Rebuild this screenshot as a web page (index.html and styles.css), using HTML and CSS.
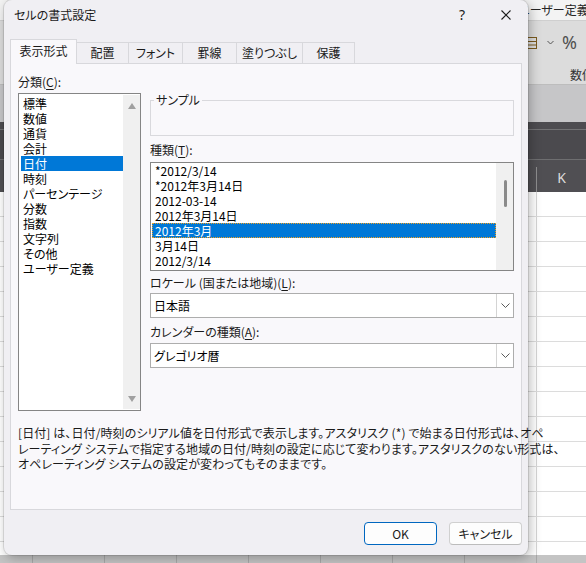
FILE: index.html
```html
<!DOCTYPE html>
<html lang="ja">
<head>
<meta charset="utf-8">
<title>セルの書式設定</title>
<link rel="stylesheet" href="styles.css">
</head>
<body>
<div class="desktop">
  <div class="excel">
    <div class="xl-title">ユーザー定義</div>
    <div class="xl-ribbon">
      <div class="xl-tools">
        <svg class="xl-numicon" width="10" height="12" viewBox="0 0 10 12"><rect x="0.5" y="0.5" width="9" height="11" fill="none" stroke="#7a5a1e"/><path d="M0.5 4.5H9.5M0.5 8H9.5" stroke="#7a5a1e"/></svg>
        <svg class="xl-chev" width="7" height="5" viewBox="0 0 7 5"><path d="M0.5 1L3.5 4L6.5 1" fill="none" stroke="#555" stroke-width="1"/></svg>
        <span class="xl-pct">%</span>
      </div>
      <div class="xl-group">数値</div>
    </div>
    <div class="xl-bar"></div>
    <div class="xl-formula"></div>
    <div class="xl-header"><span class="xl-col">K</span></div>
    <div class="xl-grid"></div>
    <div class="xl-bottom"></div>
  </div>

  <div class="dialog">
    <div class="titlebar">
      <div class="title">セルの書式設定</div>
      <div class="capbtn help">?</div>
      <div class="capbtn close"><svg width="10" height="10" viewBox="0 0 10 10"><path d="M0.5 0.5L9.5 9.5M9.5 0.5L0.5 9.5" stroke="#1b1b1b" stroke-width="1.1"/></svg></div>
    </div>
    <div class="tabs">
      <div class="tab active w67">表示形式</div>
      <div class="tab w52">配置</div>
      <div class="tab w54">フォント</div>
      <div class="tab w54">罫線</div>
      <div class="tab w66">塗りつぶし</div>
      <div class="tab w52">保護</div>
    </div>
    <div class="panel">
      <div class="cols">
        <div class="col-left">
          <div class="label">分類(<u>C</u>):</div>
          <div class="listbox cat">
            <ul class="items">
              <li>標準</li>
              <li>数値</li>
              <li>通貨</li>
              <li>会計</li>
              <li class="sel">日付</li>
              <li>時刻</li>
              <li>パーセンテージ</li>
              <li>分数</li>
              <li>指数</li>
              <li>文字列</li>
              <li>その他</li>
              <li>ユーザー定義</li>
            </ul>
            <div class="vscroll arrows">
              <span class="tri up"></span>
              <span class="tri down"></span>
            </div>
          </div>
        </div>
        <div class="col-right">
          <fieldset class="sample">
            <legend>サンプル</legend>
            <div class="sample-body"></div>
          </fieldset>
          <div class="label l-type">種類(<u>T</u>):</div>
          <div class="listbox types">
            <ul class="items">
              <li>*2012/3/14</li>
              <li>*2012年3月14日</li>
              <li>2012-03-14</li>
              <li>2012年3月14日</li>
              <li class="sel focus">2012年3月</li>
              <li>3月14日</li>
              <li>2012/3/14</li>
            </ul>
            <div class="vscroll thin"><span class="thumb"></span></div>
          </div>
          <div class="label l-locale">ロケール (国または地域)(<u>L</u>):</div>
          <div class="combo"><span class="combo-text">日本語</span><span class="combo-btn"><svg width="9" height="5" viewBox="0 0 9 5"><path d="M0.5 0.5L4.5 4.5L8.5 0.5" fill="none" stroke="#5a5a5a" stroke-width="1"/></svg></span></div>
          <div class="label l-cal">カレンダーの種類(<u>A</u>):</div>
          <div class="combo"><span class="combo-text">グレゴリオ暦</span><span class="combo-btn"><svg width="9" height="5" viewBox="0 0 9 5"><path d="M0.5 0.5L4.5 4.5L8.5 0.5" fill="none" stroke="#5a5a5a" stroke-width="1"/></svg></span></div>
        </div>
      </div>
      <p class="desc">[日付] は、日付/時刻のシリアル値を日付形式で表示します。アスタリスク (*) で始まる日付形式は、オペ<br>レーティング システムで指定する地域の日付/時刻の設定に応じて変わります。アスタリスクのない形式は、<br>オペレーティング システムの設定が変わってもそのままです。</p>
    </div>
    <div class="footer">
      <button class="btn ok">OK</button>
      <button class="btn">キャンセル</button>
    </div>
  </div>
</div>
</body>
</html>
```

FILE: styles.css
```css
* { box-sizing: border-box; }
html, body { margin: 0; padding: 0; }
body {
  width: 586px;
  height: 563px;
  overflow: hidden;
  font-family: "Noto Sans CJK JP", "Noto Sans", sans-serif;
  font-size: 12px;
  font-feature-settings: "palt";
  color: #1a1a1a;
}
.desktop { position: relative; width: 586px; height: 563px; overflow: hidden; }

/* ---------- Excel behind ---------- */
.excel { display: flex; flex-direction: column; height: 563px; }
.xl-title {
  height: 21px;
  background: #f3f3f3;
  border-bottom: 1px solid #cfcfcf;
  padding-left: 518px;
  line-height: 20px;
  color: #262626;
  white-space: nowrap;
}
.xl-ribbon {
  height: 64px;
  background: #dcdcdc;
  border-bottom: 1px solid #bdbdbd;
  white-space: nowrap;
}
.xl-tools {
  display: flex;
  align-items: center;
  height: 19px;
  margin-top: 12px;
  padding-left: 527px;
}
.xl-chev { margin-left: 10px; }
.xl-pct {
  margin-left: 8px;
  font-family: "Noto Sans", sans-serif;
  font-size: 18px;
  line-height: 19px;
  color: #505050;
}
.xl-group { margin-top: 16px; padding-left: 570px; line-height: 14px; color: #333; }
.xl-bar { height: 37px; background: #c6c6c8; }
.xl-formula {
  height: 38px;
  background: linear-gradient(to bottom, #4d4c50 0 7px, #727274 7px 8px, #4b4a4e 8px 37px, #6e6e70 37px 38px);
}
.xl-header {
  height: 32px;
  background: #504f53;
  padding-left: 536px;
  display: flex;
  align-items: flex-end;
}
.xl-col {
  width: 72px;
  height: 25px;
  border-left: 1px solid #8e8e90;
  text-align: center;
  font-family: "Noto Sans", sans-serif;
  font-size: 14px;
  line-height: 22px;
  color: #dcdcdc;
}
.xl-grid {
  height: 363px;
  background:
    repeating-linear-gradient(to bottom, transparent 0 24px, #dcdcdc 24px 25px),
    repeating-linear-gradient(to right, transparent 0 32px, #d6d6d6 32px 33px, transparent 33px 72px),
    #ffffff;
}
.xl-bottom {
  height: 8px;
  background:
    repeating-linear-gradient(to right, transparent 0 32px, #a8a8a8 32px 33px, transparent 33px 72px),
    #c4c4c4;
}

/* ---------- Dialog ---------- */
.dialog {
  position: absolute;
  left: 4px;
  top: 0;
  width: 524px;
  height: 555px;
  background: #f0eff3;
  border-radius: 8px;
  box-shadow: 0 0 0 1px rgba(0,0,0,0.10), 2px 3px 12px rgba(0,0,0,0.28);
  display: flex;
  flex-direction: column;
}
.titlebar { height: 39px; display: flex; align-items: flex-start; flex: none; }
.title { flex: 1; padding: 8px 0 0 10px; line-height: 14px; color: #1a1a1a; }
.capbtn {
  width: 44px;
  height: 30px;
  display: flex;
  align-items: center;
  justify-content: center;
}
.help { font-family: "Noto Sans", sans-serif; font-size: 14px; color: #1b1b1b; padding-bottom: 1px; }

.tabs {
  height: 24px;
  flex: none;
  display: flex;
  align-items: flex-end;
  padding-left: 6px;
}
.tab {
  height: 21px;
  border-top: 1px solid #d8d8dc;
  border-right: 1px solid #d8d8dc;
  display: flex;
  align-items: center;
  justify-content: center;
  line-height: 14px;
  color: #1a1a1a;
}
.tab.active {
  height: 25px;
  margin-bottom: -1px;
  border-left: 1px solid #d8d8dc;
  background: #f9f8fb;
  position: relative;
  z-index: 1;
  padding-bottom: 2px;
}
.w67 { width: 67px; }
.w52 { width: 52px; }
.w54 { width: 54px; }
.w66 { width: 66px; }

.panel {
  flex: none;
  height: 447px;
  margin: 0 6px;
  background: #f9f8fb;
  border: 1px solid #d8d8dc;
  padding: 11px 7px 0 7px;
}
.cols {
  display: grid;
  grid-template-columns: 123px 364px;
  column-gap: 9px;
  align-items: start;
}
.label { line-height: 14px; color: #1a1a1a; white-space: nowrap; }
.label u { text-decoration-thickness: 1px; text-underline-offset: 2px; }

.listbox {
  display: flex;
  background: #ffffff;
  border: 1px solid #858585;
  overflow: hidden;
}
.listbox.cat { margin-top: 4px; height: 318px; padding: 1px 0 1px 1px; }
.listbox.types { margin-top: 5px; height: 109px; padding: 0; }
.items { list-style: none; margin: 0; padding: 0; flex: 1; min-width: 0; }
.items li { height: 15px; line-height: 15px; white-space: nowrap; color: #000; }
.cat .items { padding-top: 1px; }
.cat .items li { margin-left: 1px; padding-left: 2px; }
.types .items li { margin-left: 1px; padding-left: 3px; }
.items li.sel { background: #0078d7; color: #ffffff; }
.items li.focus { outline: 1px dotted #f0a020; outline-offset: -1px; }

.vscroll { width: 17px; flex: none; background: #f0f0f0; }
.arrows { display: flex; flex-direction: column; justify-content: space-between; align-items: center; padding: 8px 0 7px; }
.tri { width: 0; height: 0; border-left: 4.5px solid transparent; border-right: 4.5px solid transparent; }
.tri.up { border-bottom: 6px solid #a0a0a0; }
.tri.down { border-top: 6px solid #a0a0a0; }
.thin { display: flex; justify-content: center; padding-top: 17px; }
.thumb { width: 3px; height: 27px; margin-left: 2px; background: #8a8a8a; border-radius: 2px; }

.col-right { margin-top: 18px; }
.sample {
  margin: 0;
  padding: 0;
  min-width: 0;
  border: 1px solid #d9d9dd;
}
.sample legend {
  margin-left: 3px;
  padding: 0 2px;
  line-height: 14px;
  color: #1a1a1a;
}
.sample-body { height: 28px; }
.l-type { margin-top: 7px; }
.l-locale { margin-top: 5px; }
.l-cal { margin-top: 7px; }

.combo {
  margin-top: 3px;
  height: 25px;
  display: flex;
  background: #ffffff;
  border: 1px solid #adadad;
}
.l-cal + .combo { margin-top: 4px; }
.combo-text { flex: 1; padding-left: 3px; line-height: 23px; color: #000; }
.combo-btn {
  width: 17px;
  border-left: 1px solid #d4d4d4;
  display: flex;
  align-items: center;
  justify-content: center;
}

.desc {
  margin: 14px 0 0 0;
  line-height: 15.5px;
  letter-spacing: 0.1px;
  white-space: nowrap;
  color: #1a1a1a;
}

.footer {
  flex: 1;
  display: flex;
  justify-content: flex-end;
  align-items: flex-start;
  gap: 12px;
  padding: 12px 6px 0 0;
}
.btn {
  width: 73px;
  height: 23px;
  margin: 0;
  padding: 0;
  font-family: "Noto Sans CJK JP", "Noto Sans", sans-serif;
  font-size: 12px;
  font-feature-settings: "palt";
  color: #1a1a1a;
  background: #fdfdfd;
  border: 1px solid #d0d0d0;
  border-bottom-color: #bcbcbc;
  border-radius: 4px;
  line-height: 20px;
}
.btn.ok { border: 1px solid #0067c0; }
```
